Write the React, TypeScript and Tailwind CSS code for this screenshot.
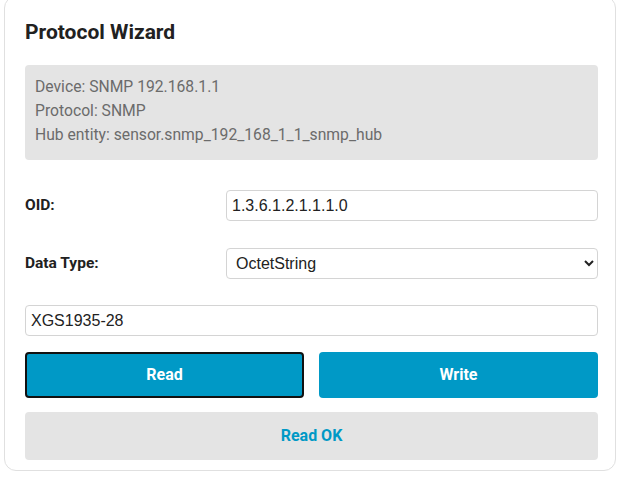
import React, { useState } from "react";

const App: React.FC = () => {
  const [oid, setOid] = useState("1.3.6.1.2.1.1.1.0");
  const [dataType, setDataType] = useState("OctetString");
  const [value, setValue] = useState("XGS1935-28");

  return (
    <div className="min-h-screen bg-white px-1 font-['Roboto',sans-serif]">
      <div className="-mt-[4px] rounded-xl border border-[#e0e0e0] bg-white pl-5 pr-[17px] pt-[21px] pb-[10px]">
        <h2 className="text-[21px] leading-7 font-bold text-[#212121]">Protocol Wizard</h2>

        {/* device info */}
        <div className="mt-[19px] rounded bg-[#e4e4e4] px-[10px] pt-[10px] pb-[13px] text-[15.7px] leading-6 text-[#6b6b6b]">
          <div>Device: SNMP 192.168.1.1</div>
          <div>Protocol: SNMP</div>
          <div>Hub entity: sensor.snmp_192_168_1_1_snmp_hub</div>
        </div>

        <div className="mt-[30px] grid grid-cols-[201px_1fr] items-center">
          <label className="text-[15.5px] font-bold text-[#212121]">OID:</label>
          <input
            type="text"
            value={oid}
            onChange={(e) => setOid(e.target.value)}
            className="h-[31px] w-full rounded border border-[#d4d4d4] px-[5px] font-['Liberation_Sans',sans-serif] text-base text-[#222]"
          />
        </div>

        <div className="mt-[27px] grid grid-cols-[201px_1fr] items-center">
          <label className="text-[15.5px] font-bold text-[#212121]">Data Type:</label>
          <select
            value={dataType}
            onChange={(e) => setDataType(e.target.value)}
            className="h-[31px] w-full rounded border border-[#d4d4d4] px-[5px] font-['Liberation_Sans',sans-serif] text-base text-[#222]"
          >
            <option>Integer</option>
            <option>OctetString</option>
            <option>Counter32</option>
            <option>Gauge32</option>
          </select>
        </div>

        <input
          type="text"
          value={value}
          onChange={(e) => setValue(e.target.value)}
          className="mt-[26px] h-[31px] w-full rounded border border-[#d4d4d4] px-[5px] font-['Liberation_Sans',sans-serif] text-base text-[#222]"
        />

        <div className="mt-4 grid grid-cols-2 gap-[15px]">
          <button className="h-[46px] rounded border-2 border-[#111] bg-[#0099c6] text-base font-bold text-white">
            Read
          </button>
          <button className="h-[46px] rounded bg-[#0099c6] text-base font-bold text-white">
            Write
          </button>
        </div>

        <div className="mt-[14px] flex h-12 items-center justify-center rounded bg-[#e4e4e4] text-base font-bold text-[#0099c6]">
          Read OK
        </div>
      </div>
    </div>
  );
};

export default App;
